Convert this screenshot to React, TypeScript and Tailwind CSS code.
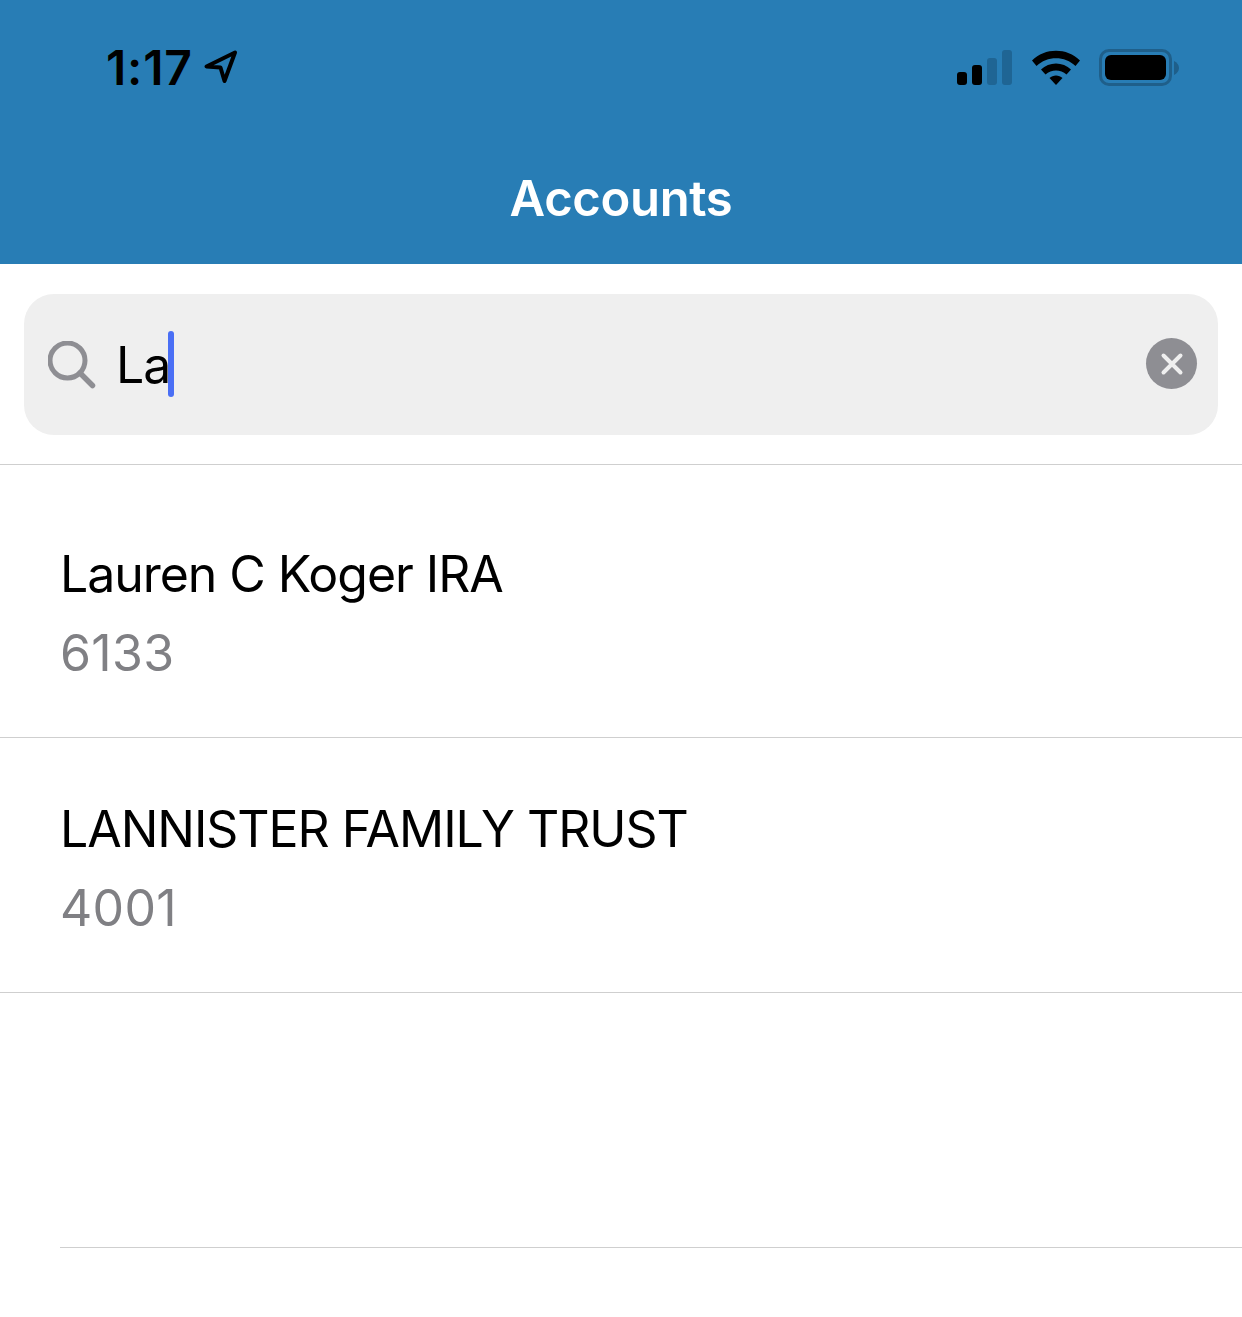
const rows = [
  { name: 'Lauren C Koger IRA', number: '6133', height: 'h-[273px]', top: 'pt-[79px]' },
  { name: 'LANNISTER FAMILY TRUST', number: '4001', height: 'h-[255px]', top: 'pt-[61px]' },
];

const StatusBar = () => (
  <div className="flex h-[171px] items-start justify-between pl-[106px] pr-[63px] pt-[40px] text-black">
    <div className="flex h-[56px] items-center">
      <span className="text-[48px] leading-[56px] font-semibold tracking-[0.8px]">1:17</span>
      <svg className="ml-[11px] mt-[-2px]" width="34" height="34" viewBox="0 0 34 34" fill="none">
        <path
          d="M2.500 16.500 31 2.500 20.500 31 16.500 17.500Z"
          stroke="#000"
          strokeWidth="4"
          strokeLinejoin="round"
        />
      </svg>
    </div>
    <div className="flex h-[56px] items-center">
      <svg className="mt-[-1px] ml-[-2px]" width="56" height="36" viewBox="0 0 56 36">
        <rect x="1" y="22" width="10" height="13" rx="3" fill="#000" />
        <rect x="16" y="15" width="10" height="20" rx="3" fill="#000" />
        <rect x="31" y="8" width="10" height="27" rx="3" fill="#1f6594" />
        <rect x="46" y="0" width="10" height="35" rx="3" fill="#1f6594" />
      </svg>
      <svg className="ml-[20px] mt-[-2px]" width="48" height="36" viewBox="0 0 48 36">
        <path d="M0 11.500C13-1.500 35-1.500 48 11.500L43.500 17C33 6.500 15 6.500 4.500 17Z" fill="#000" />
        <path d="M9 20.500C17 12.500 31 12.500 39 20.500L34.500 25.500C28.500 20 19.500 20 13.500 25.500Z" fill="#000" />
        <path d="M17.500 29C21 25.500 27 25.500 30.500 29L24 36Z" fill="#000" />
      </svg>
      <div className="ml-[19px] mt-[-1px] flex items-center">
        <div className="h-[37px] w-[73px] rounded-[10px] border-[3px] border-[#1f5f8a] p-[3px]">
          <div className="h-full w-full rounded-[6px] bg-black" />
        </div>
        <svg className="ml-[2px]" width="5" height="14" viewBox="0 0 5 14">
          <path d="M0 0C3 1.500 5 4 5 7S3 12.500 0 14Z" fill="#1f5f8a" />
        </svg>
      </div>
    </div>
  </div>
);

const App = () => {
  return (
    <div className="min-h-[1317px] w-[1242px] overflow-hidden bg-white font-['Inter',sans-serif]">
      <div className="h-[264px] bg-[#287db5]">
        <StatusBar />
        <h1 className="text-center text-[49px] leading-[56px] font-semibold tracking-[-0.35px] text-white">
          Accounts
        </h1>
      </div>

      <div className="h-[201px] border-b border-[#cfcfcf] px-[24px] pt-[30px]">
        <div className="flex h-[141px] items-center rounded-[30px] bg-[#efefef] pl-[24px] pr-[21px]">
          <svg className="mt-[1px]" width="48" height="48" viewBox="0 0 48 48" fill="none">
            <circle cx="19.500" cy="19.500" r="17.500" stroke="#8e8e93" strokeWidth="5" />
            <path d="M32 32 44.500 44.500" stroke="#8e8e93" strokeWidth="5.500" strokeLinecap="round" />
          </svg>
          <div className="ml-[20px] mt-[-1px] flex items-center">
            <span className="mt-[2px] text-[50px] leading-[60px] tracking-[-1px] text-black">La</span>
            <div className="ml-[-2px] h-[66px] w-[6px] rounded-full bg-[#4a6ff5]" />
          </div>
          <div className="ml-auto mb-[2px] flex h-[51px] w-[51px] items-center justify-center rounded-full bg-[#8e8e93]">
            <svg width="24" height="24" viewBox="0 0 24 24" fill="none">
              <path d="M3.500 3.500 20.500 20.500M20.500 3.500 3.500 20.500" stroke="#efefef" strokeWidth="4" strokeLinecap="round" />
            </svg>
          </div>
        </div>
      </div>

      {rows.map((row) => (
        <div key={row.number} className={`${row.height} ${row.top} border-b border-[#cfcfcf] pl-[60px]`}>
          <div className="text-[50px] leading-[60px] tracking-[-1.050px] text-black">{row.name}</div>
          <div className="mt-[19px] text-[50px] leading-[60px] tracking-[0.3px] text-[#808084]">{row.number}</div>
        </div>
      ))}

      <div className="ml-[60px] h-[255px] border-b border-[#cfcfcf]" />
    </div>
  );
};

export default App;
